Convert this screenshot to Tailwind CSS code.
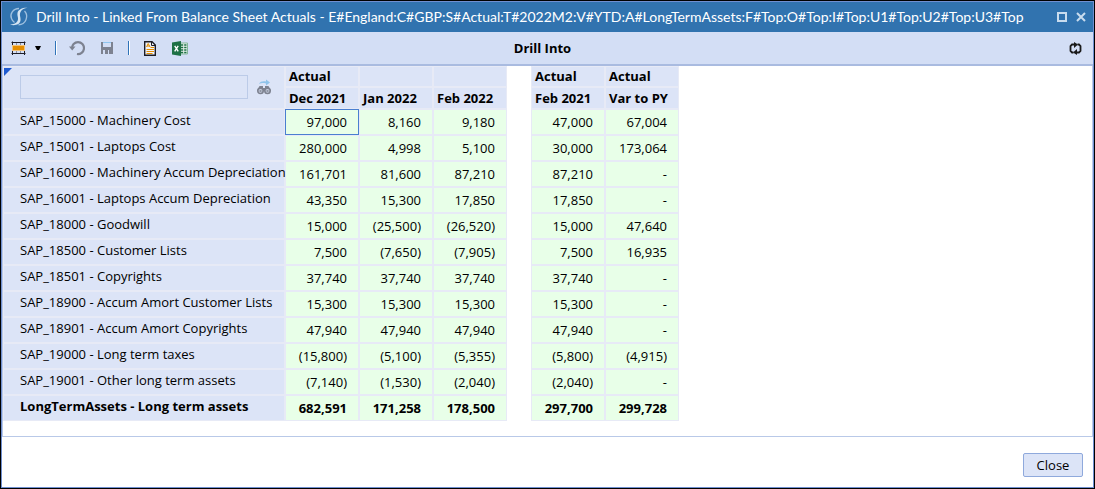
<!DOCTYPE html>
<html lang="en">
<head>
<meta charset="utf-8">
<meta name="viewport" content="width=device-width, initial-scale=1">
<title>Drill Into</title>
<script src="https://cdn.jsdelivr.net/npm/@tailwindcss/browser@4"></script>
</head>
<body class="flex min-h-screen flex-col border border-black bg-white font-['Segoe_UI','Open_Sans',sans-serif] text-[13px] leading-[18px] text-black">
<div class="flex flex-1 flex-col border border-[#6f8fd0]">
  <header class="flex h-[30px] items-center bg-[#3173af] pl-[7px] pr-[7px] text-white">
    <svg class="size-5 shrink-0" viewBox="0 0 20 20" fill="none" aria-hidden="true">
      <path d="M10 1.500C4 1.500 0.500 7 2.500 11.500C3 13 4 14.500 5.500 15.500" stroke="#9fc0df" stroke-width="1.300"/>
      <path d="M15.500 4C20 9 17 17.500 9.500 17.800" stroke="#9fc0df" stroke-width="1.300"/>
      <path d="M18.500 0.800C13.500 0.500 9 2.500 8.500 6C8 9.500 10 11 8.500 14C7 16.800 4 17.500 1 17.500C5 19 11 18 11.500 13.500C12 10 10 8.500 11.500 5C12.700 2.300 15.500 1.300 18.500 0.800Z" fill="#d5e4f2"/>
    </svg>
    <h1 class="ml-[7px] min-w-0 flex-1 overflow-hidden whitespace-nowrap font-['Segoe_UI','Lato',sans-serif] text-[14px] leading-[30px]">Drill Into - Linked From Balance Sheet Actuals - E#England:C#GBP:S#Actual:T#2022M2:V#YTD:A#LongTermAssets:F#Top:O#Top:I#Top:U1#Top:U2#Top:U3#Top</h1>
    <button class="ml-[5px]" aria-label="Maximize">
      <svg class="block size-[10px]" viewBox="0 0 10 10" fill="none"><path d="M1 1H9V9H1Z" stroke="#c9dcee" stroke-width="2"/></svg>
    </button>
    <button class="ml-[9px]" aria-label="Close window">
      <svg class="block size-[10px]" viewBox="0 0 10 10" fill="none"><path d="M1 1L9 9M9 1L1 9" stroke="#c9dcee" stroke-width="2"/></svg>
    </button>
  </header>

  <div class="grid h-[34px] grid-cols-[1fr_auto_1fr] items-center border-b-2 border-[#a9bbe0] bg-[#d3def5] pl-[9px] pr-[11px]">
    <div class="flex items-center">
      <button class="flex items-center gap-[9px]" aria-label="Grid options">
        <svg class="size-[15px]" viewBox="0 0 15 15" fill="none">
          <path d="M5.500 2V13M9.500 2V13" stroke="#8a90a0"/>
          <path d="M0.500 1.500H14.500M0.500 12.500H14.500" stroke="#1d1d26"/>
          <path d="M1.500 0.500V14M13.500 0.500V14" stroke="#1d1d26"/>
          <path d="M1 4H14V10H1Z" fill="#f3c37a"/>
          <path d="M2 5H13V9H2Z" fill="#e58e00"/>
        </svg>
        <svg class="h-[4px] w-[6px]" viewBox="0 0 6 4"><path d="M0 0H6L4 4H2Z" fill="#000"/></svg>
      </button>
      <span class="ml-[14px] h-[14px] w-[2px] border-l border-[#2f73b8] bg-white"></span>
      <button class="ml-[12px]" aria-label="Undo">
        <svg class="block size-4" viewBox="0 0 16 16" fill="none">
          <path d="M3 8.500A6 6 0 1 1 8 14" stroke="#7d8290" stroke-width="2.200"/>
          <path d="M0 6.500H6.500L3.200 10.500Z" fill="#7d8290"/>
        </svg>
      </button>
      <button class="ml-4" aria-label="Save">
        <svg class="block size-3" viewBox="0 0 12 12">
          <path d="M0 0H2V5H10V0H12V12H9V8H2V12H0Z" fill="#7d8290"/>
          <path d="M2 0H10V1H2Z" fill="#8fc5ee"/>
          <path d="M2 5H10V8H2ZM4 8H7V12H4ZM8 8H10V12H8Z" fill="#7d8290"/>
        </svg>
      </button>
      <span class="ml-[15px] h-[14px] w-[2px] border-l border-[#2f73b8] bg-white"></span>
      <button class="ml-[14px]" aria-label="Report">
        <svg class="block h-[15px] w-3" viewBox="0 0 12 15" fill="none">
          <path d="M0.700 0.700H8L11.300 4V14.300H0.700Z" fill="#f1f4fb" stroke="#1d1d26" stroke-width="1.400"/>
          <path d="M7.500 1V4.500H11" stroke="#1d1d26"/>
          <path d="M2.500 6L4.200 2.500L6 6M3 5H5.500" stroke="#e58e00"/>
          <path d="M6.500 6.500H10M2.500 8.500H10M2.500 10.500H10M2.500 12.500H8.500" stroke="#e58e00"/>
        </svg>
      </button>
      <button class="ml-4" aria-label="Export to Excel">
        <svg class="block h-[15px] w-4" viewBox="0 0 16 15" fill="none">
          <path d="M8 2H15.500V13H8Z" fill="#e8f2ed" stroke="#82b79a"/>
          <path d="M9 4H14.500M9 6.500H14.500M9 9H14.500M9 11.500H14.500" stroke="#1d7045" stroke-width="1.300"/>
          <path d="M11.700 3V12.500" stroke="#e8f2ed"/>
          <path d="M0 1.500L9 0V15L0 13.500Z" fill="#1d7045"/>
          <path d="M2.700 4.800L6.200 10.300M6.200 4.800L2.700 10.300" stroke="#fff" stroke-width="1.400"/>
        </svg>
      </button>
    </div>
    <h2 class="pr-2 text-[13px] font-bold">Drill Into</h2>
    <button class="justify-self-end" aria-label="Refresh">
      <svg class="block size-[13px]" viewBox="0 0 13 13" fill="none">
        <path d="M4.500 10.500H3L1.500 9V4L3 2.500H5.500M8.500 2.500H10L11.500 4V9L10 10.500H7.500" stroke="#1a1a1a" stroke-width="1.800"/>
        <path d="M5 0L9 2.500L5 6ZM8 7L4 10.500L8 13Z" fill="#1a1a1a"/>
      </svg>
    </button>
  </div>

  <main class="relative flex-1 border-x border-b border-[#b9c9e8]">
    <svg class="absolute left-[1px] top-[2px] size-2" viewBox="0 0 8 8" aria-hidden="true"><path d="M0 0H8L0 8Z" fill="#1f5bd0"/></svg>
    <table class="w-[676px] table-fixed border-separate border-spacing-0 whitespace-nowrap [&_td]:border [&_td]:border-[#e7eaf6] [&_td]:bg-[#e8ffe8] [&_td]:p-0 [&_td]:pr-[11px] [&_td]:text-right [&_td.gap]:border-0 [&_td.gap]:bg-white [&_th]:border [&_th]:border-[#e7eaf6] [&_th]:bg-[#dce4f7] [&_th]:p-0 [&_th]:pl-[3px] [&_th]:text-left [&_thead_th]:pb-[1px] [&_tbody_th]:pl-4 [&_tbody_th]:pb-1 [&_tbody_th]:font-normal [&_tbody_tr]:h-[26px]">
      <colgroup><col class="w-[282px]"><col class="w-[74px]"><col class="w-[74px]"><col class="w-[74px]"><col class="w-[24px]"><col class="w-[74px]"><col class="w-[74px]"></colgroup>
      <thead>
        <tr class="h-[21px]">
          <td rowspan="2" class="bg-[#dce4f7]!">
            <div class="flex items-center gap-[9px] pb-[2px] pl-4">
              <input type="text" aria-label="Find row" class="h-6 w-[228px] border border-[#bccbe8] bg-transparent px-1 outline-none">
              <button aria-label="Find next">
                <svg class="block h-4 w-[14px]" viewBox="0 0 14 16" fill="none">
                  <path d="M2 5C3 2.500 6 2 9 2.500V0.500L13 3.500L9 6.500V4.500C6 3.800 4 4 2 5Z" fill="#8fc3ea"/>
                  <path d="M2.500 7H6V9H8V7H11.500L14 12H0Z" fill="#7d8290"/>
                  <circle cx="3.500" cy="11.800" r="2.700" fill="#c9d0e2" stroke="#7d8290" stroke-width="1.600"/>
                  <circle cx="10.500" cy="11.800" r="2.700" fill="#c9d0e2" stroke="#7d8290" stroke-width="1.600"/>
                  <path d="M2.500 12H4.500M9.500 12H11.500" stroke="#7d8290" stroke-width="1.500"/>
                </svg>
              </button>
            </div>
          </td>
          <th>Actual</th><th></th><th></th><td class="gap"></td><th>Actual</th><th>Actual</th>
        </tr>
        <tr class="h-[22px]"><th scope="col">Dec 2021</th><th scope="col">Jan 2022</th><th scope="col">Feb 2022</th><td class="gap"></td><th scope="col">Feb 2021</th><th scope="col">Var to PY</th></tr>
      </thead>
      <tbody>
        <tr><th scope="row">SAP_15000 - Machinery Cost</th><td class="border-[#4a7fd0]!">97,000</td><td>8,160</td><td>9,180</td><td class="gap"></td><td>47,000</td><td>67,004</td></tr>
        <tr><th scope="row">SAP_15001 - Laptops Cost</th><td>280,000</td><td>4,998</td><td>5,100</td><td class="gap"></td><td>30,000</td><td>173,064</td></tr>
        <tr><th scope="row">SAP_16000 - Machinery Accum Depreciation</th><td>161,701</td><td>81,600</td><td>87,210</td><td class="gap"></td><td>87,210</td><td>-</td></tr>
        <tr><th scope="row">SAP_16001 - Laptops Accum Depreciation</th><td>43,350</td><td>15,300</td><td>17,850</td><td class="gap"></td><td>17,850</td><td>-</td></tr>
        <tr><th scope="row">SAP_18000 - Goodwill</th><td>15,000</td><td>(25,500)</td><td>(26,520)</td><td class="gap"></td><td>15,000</td><td>47,640</td></tr>
        <tr><th scope="row">SAP_18500 - Customer Lists</th><td>7,500</td><td>(7,650)</td><td>(7,905)</td><td class="gap"></td><td>7,500</td><td>16,935</td></tr>
        <tr><th scope="row">SAP_18501 - Copyrights</th><td>37,740</td><td>37,740</td><td>37,740</td><td class="gap"></td><td>37,740</td><td>-</td></tr>
        <tr><th scope="row">SAP_18900 - Accum Amort Customer Lists</th><td>15,300</td><td>15,300</td><td>15,300</td><td class="gap"></td><td>15,300</td><td>-</td></tr>
        <tr><th scope="row">SAP_18901 - Accum Amort Copyrights</th><td>47,940</td><td>47,940</td><td>47,940</td><td class="gap"></td><td>47,940</td><td>-</td></tr>
        <tr><th scope="row">SAP_19000 - Long term taxes</th><td>(15,800)</td><td>(5,100)</td><td>(5,355)</td><td class="gap"></td><td>(5,800)</td><td>(4,915)</td></tr>
        <tr><th scope="row">SAP_19001 - Other long term assets</th><td>(7,140)</td><td>(1,530)</td><td>(2,040)</td><td class="gap"></td><td>(2,040)</td><td>-</td></tr>
        <tr class="font-bold"><th scope="row" class="font-bold!">LongTermAssets - Long term assets</th><td>682,591</td><td>171,258</td><td>178,500</td><td class="gap"></td><td>297,700</td><td>299,728</td></tr>
      </tbody>
    </table>
  </main>

  <footer class="flex justify-end px-[10px] pb-[10px] pt-4">
    <button class="h-6 w-[60px] rounded-[2px] border border-[#8fa9dc] bg-[#dce4f7]">Close</button>
  </footer>
</div>
</body>
</html>
